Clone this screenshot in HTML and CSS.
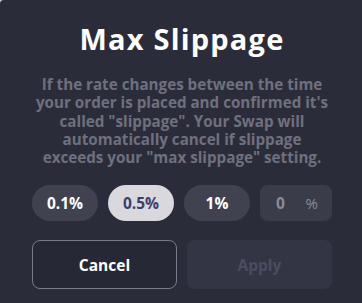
FILE: index.html
```html
<!DOCTYPE html>
<html lang="en">
<head>
	<meta charset="UTF-8">
	<title>Max Slippage</title>
	<link rel="stylesheet" href="styles.css">
</head>
<body>
	<div class="modal">
		<h1 class="title">Max Slippage</h1>
		<p class="desc">If the rate changes between the time your order is placed and confirmed it's called "slippage". Your Swap will automatically cancel if slippage exceeds your "max slippage" setting.</p>
		<div class="options">
			<button class="pill" type="button">0.1%</button>
			<button class="pill active" type="button">0.5%</button>
			<button class="pill" type="button">1%</button>
			<label class="custom">
				<input type="text" placeholder="0">
				<span>%</span>
			</label>
		</div>
		<div class="actions">
			<button class="btn cancel" type="button">Cancel</button>
			<button class="btn apply" type="button" disabled>Apply</button>
		</div>
	</div>
</body>
</html>
```

FILE: styles.css
```css
body{
	margin: 0;
	background: #c9cad2;
	font-family: "Open Sans", "Noto Sans", sans-serif;
}

.modal{
	width: 362px;
	height: 303px;
	box-sizing: border-box;
	padding: 21px 30px 0 32px;
	background: #2b2c3a;
	border-top-left-radius: 4px;
}

.title{
	margin: 0;
	text-align: center;
	color: #ffffff;
	font-size: 29px;
	font-weight: 700;
	letter-spacing: 1.2px;
	line-height: 36px;
}

.desc{
	margin: 18px 0 0;
	text-align: center;
	color: #6f707d;
	font-size: 15.2px;
	font-weight: 700;
	line-height: 18.3px;
}

.options{
	margin-top: 19px;
	display: flex;
	gap: 10px;
}

.pill{
	width: 66px;
	height: 36px;
	border: none;
	border-radius: 18px;
	background: #41424f;
	color: #ffffff;
	font-family: inherit;
	font-size: 15.5px;
	font-weight: 700;
	padding: 0;
}

.pill.active{
	background: #d8d8dd;
	color: #3b4070;
}

.custom{
	width: 72px;
	height: 36px;
	box-sizing: border-box;
	padding: 0 14px 0 16px;
	border-radius: 8px;
	background: #3b3c4a;
	display: flex;
	align-items: center;
	justify-content: space-between;
}

.custom input{
	width: 20px;
	border: none;
	background: none;
	outline: none;
	padding: 0;
	font-family: inherit;
	font-size: 15.5px;
	font-weight: 700;
	color: #ffffff;
}
.custom input::placeholder{
	color: #8a8b98;
}

.custom span{
	color: #8a8b98;
	font-size: 15px;
}

.actions{
	margin-top: 19px;
	display: flex;
	gap: 10px;
}

.btn{
	width: 145px;
	height: 49px;
	border-radius: 8px;
	font-family: inherit;
	font-size: 15.5px;
	font-weight: 700;
	padding: 0;
}

.cancel{
	border: 1px solid #7a7b8a;
	background: #272836;
	color: #ffffff;
}

.apply{
	border: none;
	background: #333545;
	color: #4a4d60;
}
```
